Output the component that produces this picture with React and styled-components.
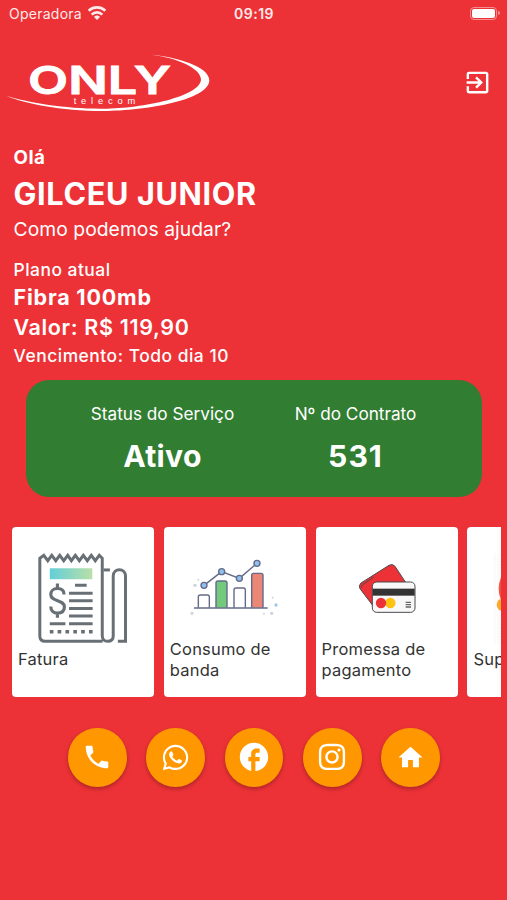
import styled, { createGlobalStyle } from "styled-components"
import { MdExitToApp, MdPhone, MdFacebook, MdHome } from "react-icons/md"
import { FaWhatsapp, FaInstagram } from "react-icons/fa"

const GlobalStyle = createGlobalStyle`
* {
    box-sizing: border-box;
}

body {
    margin: 0;
    background: #ed3237;
    font-family: Inter, "Liberation Sans", sans-serif;
    -webkit-font-smoothing: antialiased;
}
`

const StatusBar = () => {
    return (
        <StatusContainer>
            <Carrier>
                Operadora
                <svg width="18" height="14" viewBox="0 0 54 42" fill="none" stroke="#fff" strokeWidth="8">
                    <path d="M2 14 C16 1 38 1 52 14" />
                    <path d="M11 26 C20 17 34 17 43 26" />
                    <path d="M27 42 L18 33 C23 27 31 27 36 33 Z" fill="#fff" stroke="none" />
                </svg>
            </Carrier>
            <Clock>09:19</Clock>
            <Battery>
                <BatteryBody />
                <BatteryTip />
            </Battery>
        </StatusContainer>
    )
}

const Logo = () => {
    return (
        <svg width="206" height="60" viewBox="18 160 618 180" fill="#fff">
            <text x="84" y="284" fontSize="116" fontWeight="600" textLength="429" lengthAdjust="spacingAndGlyphs" stroke="#fff" strokeWidth="2.5">ONLY</text>
            <text x="221" y="314" fontSize="28" fontFamily="Liberation Sans" textLength="185">telecom</text>
            <path d="M455 165 C530 172 628 200 628 242 C628 300 440 334 310 334 C180 334 75 312 20 289 C90 310 200 328 310 327 C430 326 600 290 603 240 C603 205 530 174 455 165 Z" />
        </svg>
    )
}

const InvoiceDrawing = () => {
    return (
        <svg width="90" height="91" viewBox="100 98 270 274" fill="none" stroke="#687075" strokeWidth="9">
            <defs>
                <linearGradient id="invoice-header">
                    <stop offset="0" stopColor="#62cfd8" />
                    <stop offset="1" stopColor="#b9dfa8" />
                </linearGradient>
            </defs>
            <path d="M294 364 H121 Q105 364 105 348 V114 L117 105 L129 121 L141 105 L153 121 L165 105 L177 121 L189 105 L200 121 L212 105 L224 121 L236 105 L248 121 L260 105 L272 121 L284 105 L293 114 V348 Q294 364 309 364 Q326 364 326 348 V167 C326 142 363 142 363 167 V364 H340" />
            <path d="M297 149 H316" />
            <rect x="135" y="144" width="128" height="33" fill="url(#invoice-header)" stroke="none" />
            <path d="M158 190 V204 M158 279 V293 M178 223 C178 210 169 205 158 205 C145 205 138 213 138 223 C138 246 179 237 179 260 C179 273 170 279 158 279 C146 279 138 271 138 259" strokeWidth="9.5" />
            <path d="M211 195 H246 M193 219 H264 M193 242 H264 M193 265 H264 M193 288 H264 M193 311 H264 M135 311 H182" />
            <path d="M135 335 H264" strokeWidth="11" strokeDasharray="11 12.6" />
        </svg>
    )
}

const ChartDrawing = () => {
    return (
        <svg width="90" height="59" viewBox="97 115 270 177" fill="none" stroke="#646b88" strokeWidth="4.2">
            <path d="M139 197 L192 156 L245 176 L298 131" />
            <path d="M122 264 V232 Q122 226 128 226 H149 Q155 226 155 232 V264" fill="#fff" />
            <path d="M175 264 V190 Q175 184 181 184 H202 Q208 184 208 190 V264" fill="#73ca7c" />
            <path d="M229 264 V211 Q229 205 235 205 H257 Q263 205 263 211 V264" fill="#fff" />
            <path d="M282 264 V167 Q282 161 288 161 H310 Q316 161 316 167 V264" fill="#eb8776" />
            <path d="M109 265 H330" />
            <g fill="#8fc0ee">
                <circle cx="139" cy="197" r="9" />
                <circle cx="192" cy="156" r="9" />
                <circle cx="245" cy="176" r="9" />
                <circle cx="298" cy="131" r="9" />
            </g>
            <g fill="#d0d2da" stroke="none">
                <circle cx="112" cy="197" r="5" />
                <circle cx="122" cy="180" r="3" />
                <circle cx="103" cy="281" r="4.5" />
                <circle cx="319" cy="282" r="3" />
                <circle cx="342" cy="281" r="5" />
                <circle cx="345" cy="234" r="3" />
                <circle cx="355" cy="256" r="5" fill="#9cc8f0" />
            </g>
        </svg>
    )
}

const CardsDrawing = () => {
    return (
        <svg width="58" height="50" viewBox="142 127 174 150" stroke="#4b4a4d" strokeWidth="3">
            <path d="M189 258 L148 204 Q143 195 151 187 L235 134 Q246 128 253 137 L284 184 L280 250 Z" fill="#ed3237" />
            <path d="M153 201 Q151 195 157 191 L190 169" fill="none" />
            <rect x="185" y="184" width="128" height="91" rx="13" fill="#f8f8f8" />
            <rect x="186" y="204" width="126" height="21" fill="#333" stroke="none" />
            <circle cx="239" cy="247" r="15.5" fill="#ffc20e" stroke="none" />
            <circle cx="211" cy="247" r="15.5" fill="#ed3237" stroke="none" />
            <path d="M285 245 H301 M285 252 H301 M285 259 H301" strokeWidth="4" stroke="#666" />
        </svg>
    )
}

const SupportDrawing = () => {
    return (
        <svg width="90" height="91" viewBox="552 98 270 273">
            <defs>
                <pattern id="support-dots" width="9" height="9" patternUnits="userSpaceOnUse">
                    <circle cx="2" cy="2" r="1.5" fill="#e8eaed" />
                    <circle cx="6.5" cy="6.5" r="1.5" fill="#e8eaed" />
                </pattern>
            </defs>
            <rect x="552" y="98" width="270" height="273" fill="url(#support-dots)" />
            <circle cx="655" cy="205" r="86" fill="#f0523c" />
            <circle cx="582" cy="253" r="19" fill="#fba92c" />
        </svg>
    )
}

const services = [
    { label: "Fatura", height: 91, drawing: <InvoiceDrawing /> },
    { label: "Consumo de banda", height: 70, drawing: <ChartDrawing /> },
    { label: "Promessa de pagamento", height: 70, drawing: <CardsDrawing /> },
    { label: "Suporte", height: 91, drawing: <SupportDrawing /> },
]

const App = () => {
    return (
        <Screen>
            <GlobalStyle />
            <StatusBar />
            <Header>
                <Logo />
                <MdExitToApp size={29} />
            </Header>
            <Customer>
                <Line $size={18.8} $height={24} $weight={700} $spacing={0.5}>Olá</Line>
                <Line as="h1" $size={30.6} $height={38} $weight={700} $top={5} $spacing={0.65}>GILCEU JUNIOR</Line>
                <Line $size={19.3} $height={24} $top={4} $spacing={0.05}>Como podemos ajudar?</Line>
                <Line $size={17.4} $height={22} $weight={500} $top={18} $spacing={0.5}>Plano atual</Line>
                <Line $size={21.5} $height={28} $weight={700} $top={2} $spacing={0.8}>Fibra 100mb</Line>
                <Line $size={21.5} $height={28} $weight={600} $top={2} $spacing={0.65}>Valor: R$ 119,90</Line>
                <Line $size={17.4} $height={22} $weight={500} $top={4} $spacing={0.53}>Vencimento: Todo dia 10</Line>
            </Customer>
            <Contract>
                <Field>
                    <Line $size={17.2} $height={22}>Status do Serviço</Line>
                    <Line $size={30.2} $height={38} $weight={700} $top={12} $spacing={0.3}>Ativo</Line>
                </Field>
                <Field>
                    <Line $size={17.2} $height={22}>Nº do Contrato</Line>
                    <Line $size={30.2} $height={38} $weight={700} $top={12} $spacing={1}>531</Line>
                </Field>
            </Contract>
            <Services>
                {services.map((service) => (
                    <ServiceCard key={service.label}>
                        <Picture $height={service.height}>{service.drawing}</Picture>
                        <ServiceLabel>{service.label}</ServiceLabel>
                    </ServiceCard>
                ))}
            </Services>
            <Links>
                <RoundButton aria-label="Telefone"><MdPhone size={30} /></RoundButton>
                <RoundButton aria-label="WhatsApp"><FaWhatsapp size={29} /></RoundButton>
                <RoundButton aria-label="Facebook"><MdFacebook size={34} /></RoundButton>
                <RoundButton aria-label="Instagram"><FaInstagram size={30} /></RoundButton>
                <RoundButton aria-label="Início"><MdHome size={29} /></RoundButton>
            </Links>
        </Screen>
    )
}

const Screen = styled.div`
width: 507px;
height: 900px;
display: flex;
flex-direction: column;
overflow: hidden;
background: #ed3237;
color: #fff;
`

const StatusContainer = styled.div`
height: 26px;
padding: 0 7px 0 9px;
display: grid;
grid-template-columns: 1fr auto 1fr;
align-items: center;
font-size: 14px;
`

const Carrier = styled.div`
display: flex;
align-items: center;
gap: 6px;
letter-spacing: 0.25px;
opacity: 0.9;
`

const Clock = styled.div`
padding-top: 1px;
margin-right: 1px;
font-weight: 600;
letter-spacing: 0.5px;
opacity: 0.9;
`

const Battery = styled.div`
display: flex;
align-items: center;
justify-self: end;
gap: 1px;
`

const BatteryBody = styled.div`
width: 27px;
height: 13px;
border: 1px solid rgb(255,255,255,0.45);
border-radius: 4px;
padding: 1px;

&::before {
    content: "";
    display: block;
    height: 100%;
    border-radius: 2px;
    background: white;
}
`

const BatteryTip = styled.div`
width: 2px;
height: 4px;
border-radius: 0 2px 2px 0;
background: rgb(255,255,255,0.45);
`

const Header = styled.header`
height: 60px;
margin-top: 27px;
padding: 0 15px 0 6px;
display: flex;
align-items: center;
justify-content: space-between;

> svg:last-child {
    margin-bottom: 2px;
}
`

const Customer = styled.section`
height: 224px;
margin-top: 33px;
padding-left: 13.5px;
`

const Line = styled.p`
margin: ${({ $top }) => $top || 0}px 0 0;
font-size: ${({ $size }) => $size}px;
line-height: ${({ $height }) => $height}px;
font-weight: ${({ $weight }) => $weight || 400};
letter-spacing: ${({ $spacing }) => $spacing || 0}px;
white-space: nowrap;
`

const Contract = styled.section`
height: 117px;
margin: 10px 25px 0 26px;
padding: 23px 30px 0 40px;
border-radius: 23px;
background: #317d32;
display: flex;
`

const Field = styled.div`
flex: 1;
text-align: center;
`

const Services = styled.section`
display: flex;
gap: 9.8px;
margin: 29.5px 6px 0 12px;
overflow: hidden;
`

const ServiceCard = styled.article`
flex: 0 0 142px;
height: 170px;
padding: 26px 6px 16px;
border-radius: 4px;
background: #fff;
display: flex;
flex-direction: column;
justify-content: space-between;
`

const Picture = styled.div`
height: ${({ $height }) => $height}px;
display: flex;
align-items: center;
justify-content: center;
`

const ServiceLabel = styled.div`
height: 42px;
margin-top: -6px;
display: flex;
align-items: center;
color: #333;
font-size: 16.5px;
line-height: 20.8px;
letter-spacing: 0.2px;
`

const Links = styled.nav`
margin-top: 31.5px;
padding-left: 1px;
display: flex;
justify-content: center;
gap: 19.7px;
`

const RoundButton = styled.button`
width: 58.6px;
height: 58.6px;
padding: 0;
border: none;
border-radius: 50%;
background: #ff9800;
color: #fff;
display: flex;
align-items: center;
justify-content: center;
box-shadow: 0 2px 4px rgb(0,0,0,0.28);
`

export default App
